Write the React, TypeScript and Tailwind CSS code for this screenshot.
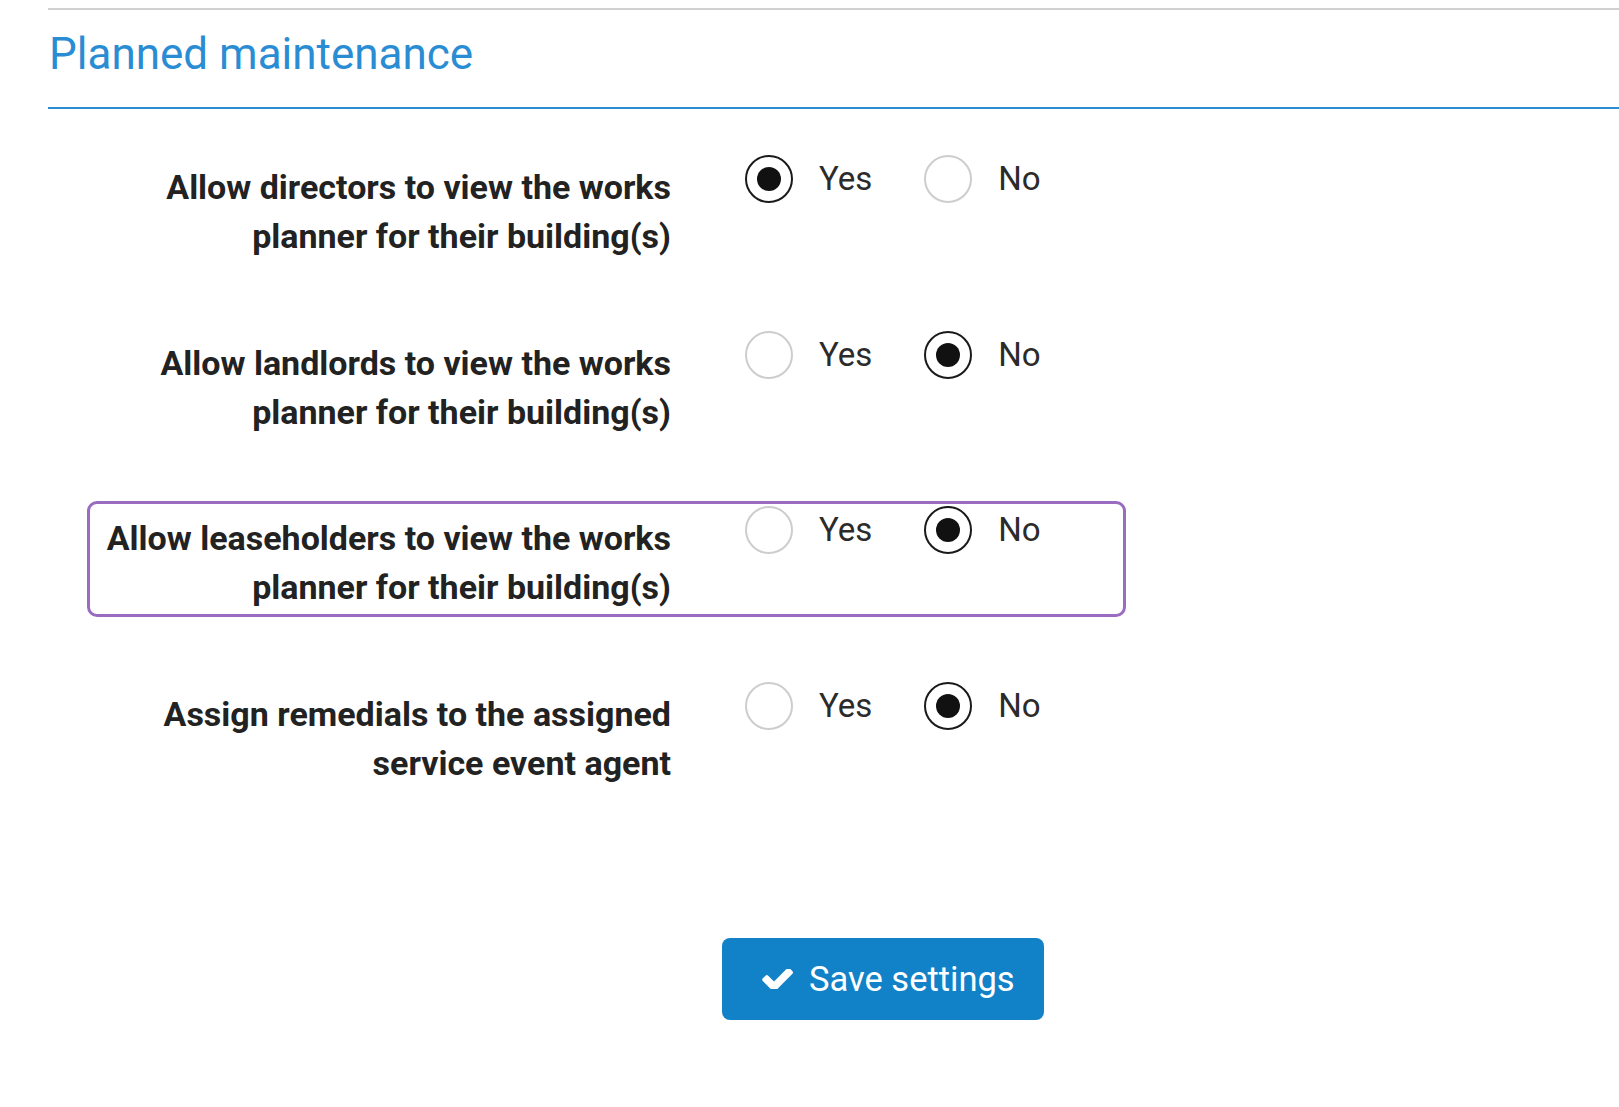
import React from 'react';

// ─── Data ─────────────────────────────────────────────────────────────────────

interface Setting {
  id: string;
  lines: [string, string];
  value: boolean;
  highlighted?: boolean;
}

const SETTINGS: Setting[] = [
  { id: 'directors', lines: ['Allow directors to view the works', 'planner for their building(s)'], value: true },
  { id: 'landlords', lines: ['Allow landlords to view the works', 'planner for their building(s)'], value: false },
  {
    id: 'leaseholders',
    lines: ['Allow leaseholders to view the works', 'planner for their building(s)'],
    value: false,
    highlighted: true,
  },
  { id: 'remedials', lines: ['Assign remedials to the assigned', 'service event agent'], value: false },
];

// ─── Radio ────────────────────────────────────────────────────────────────────

function Radio({ checked }: { checked: boolean }) {
  return (
    <span
      className={`w-[48px] h-[48px] rounded-full flex items-center justify-center bg-white flex-shrink-0 ${
        checked ? 'border-[2.5px] border-[#1a1a1a]' : 'border-2 border-[#cdcdcd]'
      }`}
    >
      {checked && <span className="w-[24px] h-[24px] rounded-full bg-[#111]" />}
    </span>
  );
}

function Option({ label, checked }: { label: string; checked: boolean }) {
  return (
    <label className="flex items-center gap-[26px] cursor-pointer">
      <Radio checked={checked} />
      <span className="text-[33px] leading-[48px] text-[#2b2b2b]">{label}</span>
    </label>
  );
}

// ─── Row ──────────────────────────────────────────────────────────────────────

function SettingRow({ s }: { s: Setting }) {
  return (
    <div
      className={`w-[1039px] h-[116px] flex border-[3px] rounded-[10px] ${
        s.highlighted ? 'border-[#9a6bbf]' : 'border-transparent'
      }`}
    >
      <div className="w-[581px] pt-[10px] text-right text-[34px] leading-[49px] font-bold text-[#222]">
        {s.lines[0]}
        <br />
        {s.lines[1]}
      </div>
      <div className="ml-[74px] pt-[2px] flex items-start">
        <div className="flex items-center h-[48px]">
          <Option label="Yes" checked={s.value} />
          <div className="ml-[52px]">
            <Option label="No" checked={!s.value} />
          </div>
        </div>
      </div>
    </div>
  );
}

// ─── Page ─────────────────────────────────────────────────────────────────────

export default function App() {
  return (
    <div className="min-h-screen bg-white pl-[48px] pt-[8px] font-['Roboto','Liberation_Sans',sans-serif]">
      <div className="h-[2px] bg-[#d0d0d0]" />

      <h2 className="mt-[17px] pl-[1px] text-[44px] leading-[54px] font-normal text-[#2a8dd4]">
        Planned maintenance
      </h2>
      <div className="mt-[26px] h-[2px] bg-[#2a8dd4]" />

      <div className="mt-[41px] ml-[39px] flex flex-col gap-[59.5px]">
        {SETTINGS.map(s => (
          <SettingRow key={s.id} s={s} />
        ))}
      </div>

      <button className="mt-[145px] ml-[674px] w-[322px] h-[82px] rounded-[8px] bg-[#1282c8] flex items-center pl-[40px] gap-[16px] text-white">
        <svg width="31" height="20" viewBox="109 402 1562 984" fill="currentColor" aria-hidden="true">
          <path d="M1671 566q0 40-28 68l-724 724-136 136q-28 28-68 28t-68-28l-136-136-362-362q-28-28-28-68t28-68l136-136q28-28 68-28t68 28l294 295 656-657q28-28 68-28t68 28l136 136q28 28 28 68z" />
        </svg>
        <span className="text-[34.5px] leading-[48px]">Save settings</span>
      </button>
    </div>
  );
}
